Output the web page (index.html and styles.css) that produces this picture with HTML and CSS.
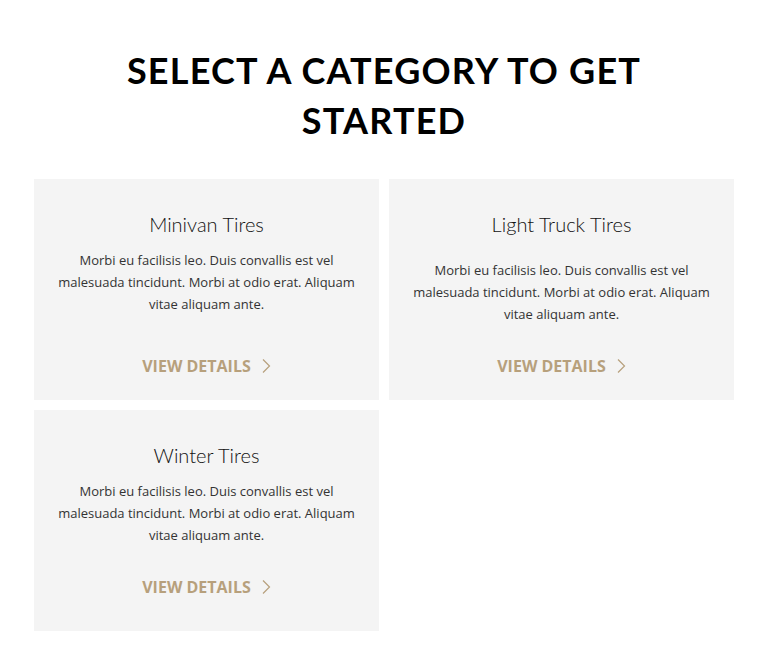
FILE: index.html
```html
<!DOCTYPE html>
<html lang="en">
<head>
  <meta charset="UTF-8">
  <meta name="viewport" content="width=device-width, initial-scale=1.0">
  <title>Tire Categories</title>
  <link rel="stylesheet" href="styles.css">
</head>
<body>
  <div class="container">
    <h1>Select a category to get started</h1>

    <div class="categories">
      <div class="category">
        <h2>Minivan Tires</h2>
        <p>Morbi eu facilisis leo. Duis convallis est vel malesuada tincidunt. Morbi at odio erat. Aliquam vitae aliquam ante.</p>
        <a href="#" class="details">View Details
          <svg width="10" height="16" viewBox="0 0 10 16"><polyline points="2,1.5 8.5,8 2,14.5" /></svg>
        </a>
      </div>

      <div class="category category-wide">
        <h2>Light Truck Tires</h2>
        <p>Morbi eu facilisis leo. Duis convallis est vel malesuada tincidunt. Morbi at odio erat. Aliquam vitae aliquam ante.</p>
        <a href="#" class="details">View Details
          <svg width="10" height="16" viewBox="0 0 10 16"><polyline points="2,1.5 8.5,8 2,14.5" /></svg>
        </a>
      </div>

      <div class="category">
        <h2>Winter Tires</h2>
        <p>Morbi eu facilisis leo. Duis convallis est vel malesuada tincidunt. Morbi at odio erat. Aliquam vitae aliquam ante.</p>
        <a href="#" class="details">View Details
          <svg width="10" height="16" viewBox="0 0 10 16"><polyline points="2,1.5 8.5,8 2,14.5" /></svg>
        </a>
      </div>
    </div>
  </div>
</body>
</html>
```

FILE: styles.css
```css
body {
  margin: 0;
  font-family: 'Open Sans', 'Liberation Sans', sans-serif;
  background-color: #fff;
  color: #333;
}

.container {
  max-width: 700px;
  margin: 0 auto;
  padding: 45px 0 40px;
}

h1 {
  max-width: 560px;
  margin: 0 auto 34px;
  text-align: center;
  text-transform: uppercase;
  font-family: 'Lato', 'Liberation Sans', sans-serif;
  font-weight: 700;
  font-size: 36px;
  line-height: 50px;
  letter-spacing: 1.2px;
  color: #000;
}

.categories {
  display: grid;
  grid-template-columns: 1fr 1fr;
  gap: 10px;
}

.category {
  display: flex;
  flex-direction: column;
  align-items: center;
  min-height: 221px;
  box-sizing: border-box;
  padding: 30px 20px 22px;
  background-color: #f4f4f4; /* light grey card */
  text-align: center;
}

.category h2 {
  margin: 0 0 10px;
  font-family: 'Lato', 'Liberation Sans', sans-serif;
  font-weight: 300;
  font-size: 20px;
  line-height: 30px;
  color: #111;
}

.category-wide h2 {
  margin-bottom: 20px;
}

.category p {
  margin: 0;
  font-size: 13px;
  line-height: 22px;
  color: #333;
}

.details {
  display: flex;
  align-items: center;
  gap: 10px;
  margin-top: 29px;
  font-size: 16px;
  font-weight: 700;
  line-height: 24px;
  text-transform: uppercase;
  text-decoration: none;
  color: #b7a07c; /* tan */
}

/* first card stretches to its row, link sits at the bottom */
.category:first-child .details {
  margin-top: auto;
}

.details svg polyline {
  fill: none;
  stroke: #b7a07c;
  stroke-width: 1.2;
}
```
